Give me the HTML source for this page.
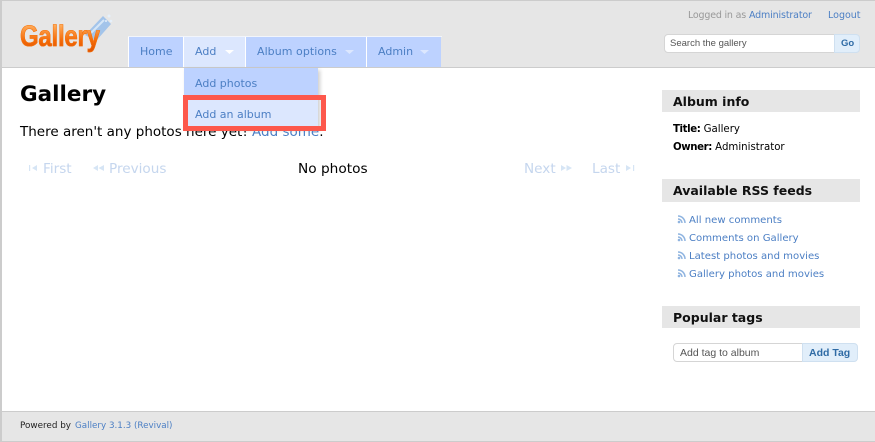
<!DOCTYPE html>
<html><head><meta charset="utf-8"><style>
html,body{margin:0;padding:0;background:#fff}
body{width:875px;height:442px;position:relative;overflow:hidden;font-family:"DejaVu Sans","Liberation Sans",sans-serif;color:#000}
div,a,span,svg{position:absolute;white-space:nowrap}
.t{font-size:11px;line-height:14px;color:#4c7fc4}
.r{font-size:10.1px;line-height:14px;color:#4c7fc4;left:689px}
.g{background:#e6e6e6}
.tab{background:#bdd2ff;height:30px;top:37px}
.h{left:662px;width:198px;height:22px;background:#e6e6e6}
.h span{left:11px;top:4px;font-size:12.5px;line-height:16px;font-weight:bold;color:#111}
.d{color:#c5d6ee;font-size:13.6px;line-height:18px;top:160px}
b{letter-spacing:-.4px}
</style></head><body>
<div class="g" style="left:0;top:0;width:875px;height:67px"></div>
<div style="left:0;top:0;width:875px;height:1px;background:#ccc"></div>
<div style="left:0;top:67px;width:875px;height:1px;background:#ccc"></div>
<div class="g" style="left:0;top:412px;width:875px;height:29px"></div>
<div style="left:0;top:411px;width:875px;height:1px;background:#ccc"></div>
<div style="left:0;top:441px;width:875px;height:1px;background:#ccc"></div>
<div style="left:0;top:0;width:2px;height:442px;background:#ccc"></div>

<svg style="left:84px;top:13px" width="30" height="30" viewBox="0 0 30 30"><path d="M1 22 L19 3 L27 11 L12 28 Z" fill="#a3c4ea"/><path d="M7 20 L20 7" stroke="#d5e6f7" stroke-width="2"/><circle cx="25" cy="3" r="1.500" fill="#e6f0fa"/><circle cx="27" cy="8" r="1.300" fill="#e6f0fa"/><circle cx="22" cy="8" r="1" fill="#e6f0fa"/></svg>
<div style="left:20px;top:19px;font-family:'Liberation Sans',sans-serif;font-weight:bold;font-size:30px;line-height:36px;letter-spacing:-.3px;transform:scaleX(.8);transform-origin:0 0;-webkit-text-stroke:.6px #f4740f;background:linear-gradient(#ffb060 15%,#f46a08 60%,#d94d00);-webkit-background-clip:text;background-clip:text;color:transparent">Gallery</div>

<div style="left:128px;top:36px;width:1px;height:31px;background:#fff"></div>
<div style="left:128px;top:36px;width:314px;height:1px;background:#f2f5fb"></div>
<div class="tab" style="left:129px;width:54px"></div>
<div style="left:183px;top:37px;width:1px;height:30px;background:#fff"></div>
<div class="tab" style="left:184px;width:61px;background:#dce7fe"></div>
<div style="left:245px;top:37px;width:1px;height:30px;background:#fff"></div>
<div class="tab" style="left:246px;width:120px"></div>
<div style="left:366px;top:37px;width:1px;height:30px;background:#fff"></div>
<div class="tab" style="left:367px;width:74px"></div>
<span class="t" style="left:140px;top:45px">Home</span>
<span class="t" style="left:195px;top:45px">Add</span>
<span class="t" style="left:257px;top:45px;letter-spacing:.05px">Album options</span>
<span class="t" style="left:378px;top:45px">Admin</span>
<svg style="left:225px;top:50px" width="9" height="4"><path d="M0 0H9L4.500 4Z" fill="#fff"/></svg>
<svg style="left:345px;top:50px" width="9" height="4"><path d="M0 0H9L4.500 4Z" fill="#dce7fe"/></svg>
<svg style="left:420px;top:50px" width="9" height="4"><path d="M0 0H9L4.500 4Z" fill="#dce7fe"/></svg>

<div style="left:184px;top:68px;width:134px;height:60px;box-shadow:2px 2px 4px rgba(0,0,0,.2)"></div>
<div style="left:184px;top:68px;width:134px;height:29px;background:#bdd2ff"></div>
<div style="left:184px;top:98px;width:134px;height:30px;background:#dce7fe"></div>
<span class="t" style="left:195px;top:77px">Add photos</span>
<span class="t" style="left:195px;top:108px">Add an album</span>

<div style="left:20px;top:80px;font-size:21.5px;line-height:30px;font-weight:bold;color:#000">Gallery</div>
<div style="left:20px;top:123px;font-size:13.5px;line-height:18px">There aren't any photos here yet! <span style="position:static;color:#4c7fc4">Add some</span>.</div>
<div style="left:183px;top:95px;width:133px;height:26px;border:5px solid #fd584c"></div>

<svg style="left:29px;top:165px" width="9" height="6"><path d="M0 0H1.200V6H0ZM8 0V6L3 3Z" fill="#d6e5f5"/></svg>
<span class="d" style="left:43px">First</span>
<svg style="left:93px;top:165px" width="11" height="6"><path d="M5 0V6L0 3ZM11 0V6L5.500 3Z" fill="#d6e5f5"/></svg>
<span class="d" style="left:109px">Previous</span>
<span style="left:298px;top:160px;font-size:13.7px;line-height:18px">No photos</span>
<span class="d" style="left:524px">Next</span>
<svg style="left:561px;top:165px" width="11" height="6"><path d="M0 0V6L5 3ZM5.500 0V6L11 3Z" fill="#d6e5f5"/></svg>
<span class="d" style="left:592px">Last</span>
<svg style="left:626px;top:165px" width="9" height="6"><path d="M0 0V6L5 3ZM7 0H8.200V6H7Z" fill="#d6e5f5"/></svg>

<span style="left:688px;top:9px;font-size:9.5px;line-height:13px;color:#999;letter-spacing:-.2px">Logged in as</span>
<span style="left:749px;top:9px;font-size:9.5px;line-height:13px;color:#4c7fc4;letter-spacing:-.15px">Administrator</span>
<span style="left:828px;top:9px;font-size:9.5px;line-height:13px;color:#4c7fc4">Logout</span>
<div style="left:664px;top:34px;width:169px;height:17px;background:#fff;border:1px solid #d5d5d5;border-radius:4px 0 0 4px"></div>
<span style="left:670px;top:38px;font-family:'Liberation Sans',sans-serif;font-size:9.5px;line-height:12px;color:#555">Search the gallery</span>
<div style="left:834px;top:34px;width:24px;height:17px;background:#e1eefa;border:1px solid #cfe0f0;border-radius:0 4px 4px 0"></div>
<span style="left:841px;top:38px;font-family:'Liberation Sans',sans-serif;font-size:9.5px;line-height:12px;font-weight:bold;color:#2f6ba5">Go</span>

<div class="h" style="top:90px"><span>Album info</span></div>
<div style="left:673px;top:123px;font-size:10.2px;line-height:14px"><b>Title:</b> Gallery</div>
<div style="left:673px;top:141px;font-size:10.2px;line-height:14px"><b>Owner:</b> Administrator</div>

<div class="h" style="top:179px;height:23px"><span>Available RSS feeds</span></div>
<svg style="left:677px;top:215px" width="9" height="9"><path d="M1 1A7 7 0 0 1 8 8M1 4A4 4 0 0 1 5 8" fill="none" stroke="#8fb4e0" stroke-width="1.500"/><circle cx="2" cy="7" r="1.300" fill="#8fb4e0"/></svg>
<svg style="left:677px;top:233px" width="9" height="9"><path d="M1 1A7 7 0 0 1 8 8M1 4A4 4 0 0 1 5 8" fill="none" stroke="#8fb4e0" stroke-width="1.500"/><circle cx="2" cy="7" r="1.300" fill="#8fb4e0"/></svg>
<svg style="left:677px;top:251px" width="9" height="9"><path d="M1 1A7 7 0 0 1 8 8M1 4A4 4 0 0 1 5 8" fill="none" stroke="#8fb4e0" stroke-width="1.500"/><circle cx="2" cy="7" r="1.300" fill="#8fb4e0"/></svg>
<svg style="left:677px;top:269px" width="9" height="9"><path d="M1 1A7 7 0 0 1 8 8M1 4A4 4 0 0 1 5 8" fill="none" stroke="#8fb4e0" stroke-width="1.500"/><circle cx="2" cy="7" r="1.300" fill="#8fb4e0"/></svg>
<span class="r" style="top:214px">All new comments</span>
<span class="r" style="top:232px">Comments on Gallery</span>
<span class="r" style="top:250px">Latest photos and movies</span>
<span class="r" style="top:268px">Gallery photos and movies</span>

<div class="h" style="top:306px"><span>Popular tags</span></div>
<div style="left:673px;top:343px;width:128px;height:17px;background:#fff;border:1px solid #d5d5d5;border-radius:4px 0 0 4px"></div>
<span style="left:680px;top:347px;font-family:'Liberation Sans',sans-serif;font-size:10.5px;line-height:12px;color:#555">Add tag to album</span>
<div style="left:802px;top:343px;width:54px;height:17px;background:#e1eefa;border:1px solid #cfe0f0;border-radius:0 4px 4px 0"></div>
<span style="left:809px;top:347px;font-family:'Liberation Sans',sans-serif;font-size:10.5px;line-height:12px;font-weight:bold;color:#2f6ba5">Add Tag</span>

<span style="left:20px;top:420px;font-size:8.8px;line-height:13px;color:#222">Powered by</span>
<span style="left:75px;top:420px;font-size:8.75px;line-height:13px;color:#4c7fc4">Gallery 3.1.3 (Revival)</span>
</body></html>
